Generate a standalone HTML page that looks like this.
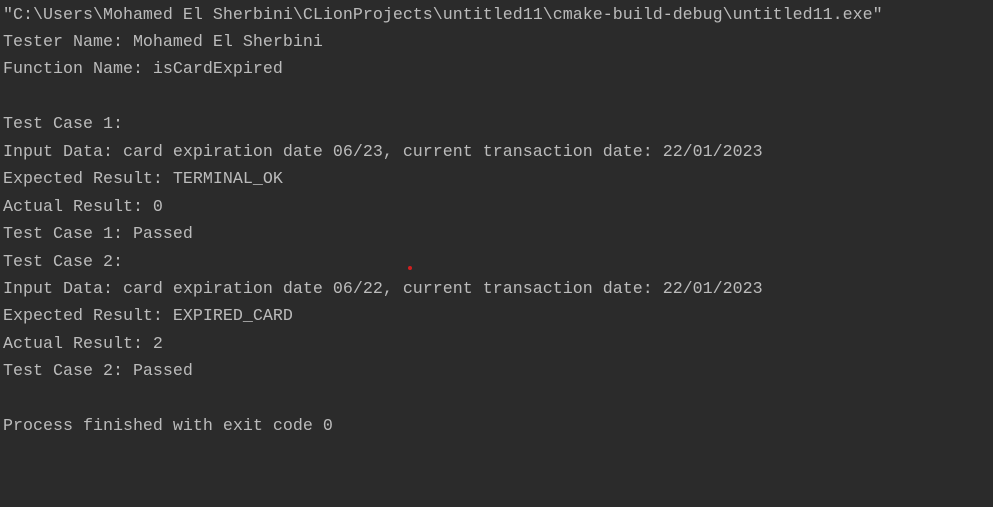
<!DOCTYPE html>
<html><head><style>
html,body{margin:0;padding:0;background:#2b2b2b;width:993px;height:507px;overflow:hidden}
pre{margin:0;padding:0 0 0 3px;font-family:"Liberation Mono",monospace;font-size:16.67px;line-height:27.45px;color:#bbbbbb;position:relative;top:1.5px}
.dot{position:absolute;left:408px;top:266px;width:4px;height:4px;border-radius:50%;background:#d02020}
</style></head><body>
<pre>"C:\Users\Mohamed El Sherbini\CLionProjects\untitled11\cmake-build-debug\untitled11.exe"
Tester Name: Mohamed El Sherbini
Function Name: isCardExpired

Test Case 1:
Input Data: card expiration date 06/23, current transaction date: 22/01/2023
Expected Result: TERMINAL_OK
Actual Result: 0
Test Case 1: Passed
Test Case 2:
Input Data: card expiration date 06/22, current transaction date: 22/01/2023
Expected Result: EXPIRED_CARD
Actual Result: 2
Test Case 2: Passed

Process finished with exit code 0</pre>
<div class="dot"></div>
</body></html>
